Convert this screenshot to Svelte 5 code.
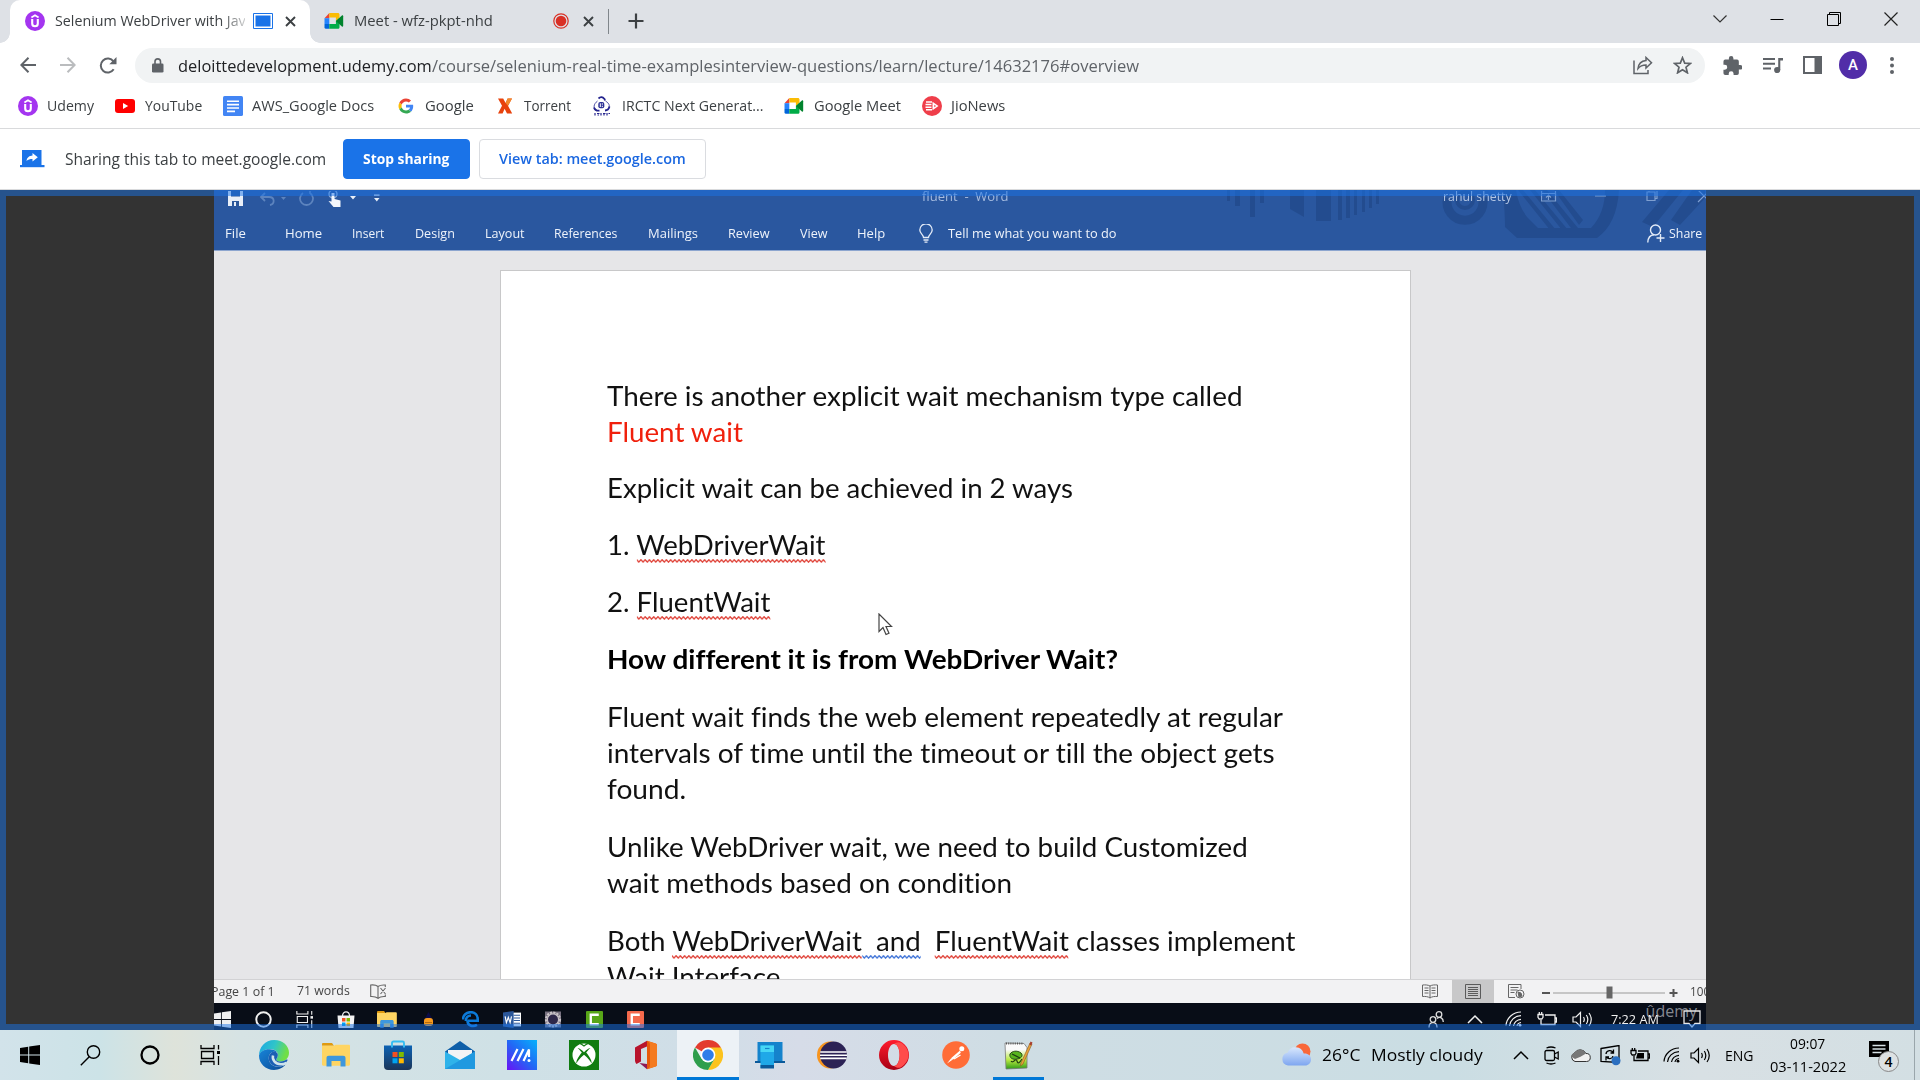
<script>
  // Scales a run of text horizontally so it occupies exactly `width` pixels in the flow.
  function fit(node, width) {
    const apply = () => {
      const natural = node.offsetWidth;
      if (!natural) return;
      node.style.transform = `scaleX(${width / natural})`;
      node.style.marginRight = `${width - natural}px`;
    };
    apply();
    document.fonts.ready.then(apply);
  }

  const bookmarks = [
    { icon: 'udemy', label: 'Udemy', w: 47 },
    { icon: 'youtube', label: 'YouTube', w: 57.5 },
    { icon: 'docs', label: 'AWS_Google Docs', w: 122.5 },
    { icon: 'google', label: 'Google', w: 48.5 },
    { icon: 'torrent', label: 'Torrent', w: 47.5 },
    { icon: 'irctc', label: 'IRCTC Next Generat...', w: 141.5 },
    { icon: 'meet', label: 'Google Meet', w: 87 },
    { icon: 'jio', label: 'JioNews', w: 54 }
  ];

  const menu = [
    ['Home', 37], ['Insert', 32], ['Design', 40], ['Layout', 40], ['References', 63.5],
    ['Mailings', 50], ['Review', 41.5], ['View', 28], ['Help', 28]
  ];

  const innerApps = ['win', 'cortana', 'tasks', 'bag', 'folder', 'lamp', 'oldEdge', 'word', 'gear', 'camGreen', 'camRed'];
  const apps = ['edge', 'folder', 'store', 'mail', 'msi', 'xbox', 'office', 'chrome', 'phone', 'eclipse', 'opera', 'postman', 'npp'];
</script>

{#snippet wave(kind)}
  <svg class="wave {kind}" height="4" aria-hidden="true">
    <defs>
      <pattern id="zig-{kind}" width="4" height="4" patternUnits="userSpaceOnUse">
        <path d="M-1 -.2 0 .8 2 3.1 4 .8 5 -.2" fill="none" stroke="currentColor" stroke-width="1.3" />
      </pattern>
    </defs>
    <rect width="100%" height="4" fill="url(#zig-{kind})" />
  </svg>
{/snippet}

{#snippet glyph(name)}
  {#if name === 'udemy'}
    <svg width="20" height="20" viewBox="0 0 20 20"><circle cx="10" cy="10" r="10" fill="#a435f0" /><path d="M6.400 6.500 10 4.200l3.600 2.300" fill="none" stroke="#fff" stroke-width="1.700" /><path d="M7.200 8v4.500a2.800 2.800 0 0 0 5.600 0V8" fill="none" stroke="#fff" stroke-width="2.100" /></svg>
  {:else if name === 'youtube'}
    <svg width="20" height="20" viewBox="0 0 20 20"><rect y="3" width="20" height="14" rx="3" fill="#f00" /><path d="M8 7v6l5.2-3z" fill="#fff" /></svg>
  {:else if name === 'docs'}
    <svg width="20" height="20" viewBox="0 0 20 20"><rect width="20" height="20" rx="1.6" fill="#4285f4" /><path d="M4 5.2h12M4 8.6h12M4 12h12M4 15.4h8" stroke="#fff" stroke-width="1.6" /></svg>
  {:else if name === 'google'}
    <svg width="20" height="20" viewBox="-8 -8 64 64"><path fill="#ea4335" d="M24 9.5c3.54 0 6.71 1.22 9.21 3.6l6.85-6.85C35.9 2.38 30.47 0 24 0 14.62 0 6.51 5.38 2.56 13.22l7.98 6.19C12.43 13.72 17.74 9.5 24 9.5z" /><path fill="#4285f4" d="M46.98 24.55c0-1.57-.15-3.09-.38-4.55H24v9.02h12.94c-.58 2.96-2.26 5.48-4.78 7.18l7.73 6c4.51-4.18 7.09-10.36 7.09-17.65z" /><path fill="#fbbc05" d="M10.53 28.59A14.5 14.5 0 0 1 9.77 24c0-1.6.27-3.14.76-4.59l-7.98-6.19A24 24 0 0 0 0 24c0 3.88.92 7.54 2.56 10.78z" /><path fill="#34a853" d="M24 48c6.48 0 11.93-2.13 15.89-5.81l-7.73-6c-2.15 1.45-4.92 2.3-8.16 2.3-6.26 0-11.57-4.22-13.47-9.91l-7.98 6.19C6.51 42.62 14.62 48 24 48z" /></svg>
  {:else if name === 'torrent'}
    <svg width="20" height="20" viewBox="0 0 20 20"><path d="M3 2.5h5.2l2.4 4.6 2-4.6H17l-4 7.3 4.2 7.7H12l-2.4-4.8-2 4.8H3l4-7.700z" fill="#e8420c" /><path d="M12.600 2.500H17l-4 7.300-2.400-2.700z" fill="#f28a2c" /></svg>
  {:else if name === 'irctc'}
    <svg width="20" height="20" viewBox="0 0 20 20"><g fill="none" stroke="#23238e"><path d="M6.500 2.500q3-2.800 6 .5l.5 1.500" stroke-width="1.800" /><path d="M5.500 5C1.500 8 .5 12.500 5.500 14.500" stroke-width=".8" /><path d="M2 11.500q1 3.500 5.500 3.200" stroke-width="1.800" /><path d="M13.500 5c4 2.500 4.500 5 3 7.500" stroke-width=".8" /><path d="M17.500 10.500q-1 3.800-4.500 4" stroke-width="1.800" /></g><rect x="6.300" y="6" width="6" height="6.300" rx="2" fill="#2a2f95" /><path d="M8.300 7.300v3.700M10.300 7.300v1.400M10.300 9.700v1.400" stroke="#fff" stroke-width="1" /><path d="M3 17v2.500M5 17.500h2.500M5.500 19h1.500M9 17v2.500M11 17.500h2.500M12 18v1.500M15 17v2.500M16.500 17.500h1.500" stroke="#23238e" stroke-width="1.200" /></svg>
  {:else if name === 'meet'}
    <svg width="20" height="20" viewBox="0 0 20 20"><path fill="#ea4335" d="M5.300 2v5.200H.500z" /><path fill="#fbbc04" d="M5.300 2h8.500c1 0 1.700.600 1.700 1.600V7l-3.600 3V6.500H5.300z" /><path fill="#2684fc" d="M.500 7.200h4.800v5.800H.500z" /><path fill="#0066da" d="M.500 13h4.800v4.800H2A1.500 1.500 0 0 1 .500 16.300z" /><path fill="#00ac47" d="M5.300 17.800V13h6.600v-3l3.600-3v9.200c0 1-.700 1.600-1.700 1.600z" /><path fill="#00832d" d="m11.900 10 6-5.400c.700-.500 1.300-.200 1.300.600v9.600c0 .800-.600 1.100-1.300.600z" /></svg>
  {:else if name === 'jio'}
    <svg width="20" height="20" viewBox="0 0 20 20"><circle cx="10" cy="10" r="10" fill="#ef3e4a" /><path d="M4 6h6M3.500 8.600h6M3.500 11.200h6M4 13.800h6" stroke="#fff" stroke-width="1.500" /><path d="m10.500 5.800 6 4.200-6 4.200z" fill="#fff" /><path d="m12.300 8.800 1.700 1.200-1.700 1.200z" fill="#ef3e4a" /></svg>
  {:else if name === 'win'}
    <svg width="20" height="20" viewBox="0 0 20 20"><path fill="currentColor" d="M0 2.900 8.200 1.700v7.800H0zM9.200 1.500 20 0v9.500H9.200zM0 10.500h8.200v7.800L0 17.100zM9.200 10.500H20V20L9.200 18.500z" /></svg>
  {:else if name === 'cortana'}
    <svg width="20" height="20" viewBox="0 0 20 20"><circle cx="10" cy="10" r="8.500" fill="none" stroke="currentColor" stroke-width="2.300" /></svg>
  {:else if name === 'tasks'}
    <svg width="20" height="20" viewBox="0 0 20 20"><path d="M1 0v3.500h13V0M1 20v-3.500h13V20M1.500 6.500h12v7h-12zM18.500 0v4.500M18.500 11v9" fill="none" stroke="currentColor" stroke-width="1.300" /><path d="M17 6h3v3h-3z" fill="currentColor" /></svg>
  {:else if name === 'edge'}
    <svg width="30" height="30" viewBox="0 0 30 30"><defs><linearGradient id="eg" x1="0" y1="0" x2="1" y2=".3"><stop offset="0" stop-color="#1aa6e6" /><stop offset=".55" stop-color="#30c5c8" /><stop offset="1" stop-color="#70df45" /></linearGradient><linearGradient id="eb" x1="0" y1="0" x2="1" y2="1"><stop offset="0" stop-color="#1784d8" /><stop offset="1" stop-color="#0c4a96" /></linearGradient></defs><path d="M0 16C0 7 6 0 15.200 0 24 0 30 6 30 12.800c0 5.500-4.300 8.700-8.300 8.700-3.700 0-5-1.500-4-3.100 1-1.600 1.100-2.300 1.100-3.700 0-3-3.300-5.600-7.600-5.600C5.300 9.100.8 12 0 16z" fill="url(#eg)" /><path d="M0 15.500C1 11.500 5.500 9 10.600 9.200c3.400 0 6 1 7.400 3-4-1.800-8.300 1-8.300 6 0 5.700 5.400 9.300 11 8.600 2.600-.400 4.500-1.400 6-2.500C24.500 27.500 20 30 15 30 6.500 30 0 23.500 0 15.500z" fill="url(#eb)" /><path d="M9.700 18.300c0-4 2.800-6.700 5.800-6.800 2 .400 3.300 1.700 3.300 3.200 0 1.400-.200 2.200-1.100 3.700-1 1.600.3 3.100 4 3.100 2.300 0 4.300-.9 5.700-1.900.9-.5 1.400.3 1 1-3 5-6.400 6.200-9.400 6.200-5 0-9.300-3.700-9.300-8.500z" fill="#1b5fb4" /><path d="M14 15.500c-1 4 2 8.700 8 8.700 2.200 0 4-.600 5.400-1.400" fill="none" stroke="#cfe3ec" stroke-width="2.500" /></svg>
  {:else if name === 'oldEdge'}
    <svg width="17" height="17" viewBox="0 0 17 17"><path d="M1 8.500C1 4 4.500 1.200 8.700 1.200c4.300 0 7 2.900 7 6.800v1.700H5.500M3.800 10C3.800 6.500 6 4.500 9 4.500M5.500 9.500c0 6 6 6.500 9.500 4.300" fill="none" stroke="#0c7ad8" stroke-width="2.600" /></svg>
  {:else if name === 'bag'}
    <svg width="18" height="17" viewBox="0 0 18 17"><path d="M5.500 5C5.500-.5 12.500-.5 12.500 5" fill="none" stroke="#eee" stroke-width="1.200" /><path d="M.5 4.500h17l-1 12.500h-15z" fill="#f3f3f3" /><path d="M5 7h3.500v3.500H5z" fill="#f25022" /><path d="M9.500 7H13v3.500H9.500z" fill="#7fba00" /><path d="M5 11.500h3.500V15H5z" fill="#00a4ef" /><path d="M9.500 11.500H13V15H9.500z" fill="#ffb900" /></svg>
  {:else if name === 'folder'}
    <svg width="28" height="24" viewBox="0 0 28 24"><path d="M0 1.200C0 .5.500 0 1.200 0H10l2 2.800H0z" fill="#e09a10" /><path d="M0 2.800h12l1.500-1H26.800c.700 0 1.200.500 1.200 1.200V21.500c0 .700-.500 1.200-1.200 1.200H1.200C.500 22.700 0 22.200 0 21.500z" fill="#ffd563" /><path d="M4.500 23.500V15c0-1.400.900-2.300 2.300-2.300h14.400c1.400 0 2.300.9 2.300 2.300v8.500h-5V18h-9v5.500z" fill="#3e97dd" /></svg>
  {:else if name === 'store'}
    <svg width="30" height="30" viewBox="0 0 30 30"><defs><linearGradient id="sg" x1="0" y1="0" x2="0" y2="1"><stop offset="0" stop-color="#0c62b4" /><stop offset="1" stop-color="#1b3558" /></linearGradient></defs><path d="M1 5.500h28V26a4 4 0 0 1-4 4H5a4 4 0 0 1-4-4z" fill="url(#sg)" /><path d="M9 7.500V3C9 2.200 9.600 1.500 10.500 1.500h9c.9 0 1.500.7 1.500 1.500v4.500" fill="none" stroke="#35bdf2" stroke-width="1.900" /><path d="M9.500 12h5v5h-5z" fill="#f25022" /><path d="M15.800 12h5v5h-5z" fill="#7fba00" /><path d="M9.500 18.300h5v5h-5z" fill="#00a4ef" /><path d="M15.800 18.300h5v5h-5z" fill="#ffb900" /></svg>
  {:else if name === 'mail'}
    <svg width="30" height="28" viewBox="0 0 30 28"><path d="M0 10.500 15 0l15 10.500V15H0z" fill="#0f5fa8" /><path d="M3 9h24v10H3z" fill="#f3f3f5" /><path d="M0 10.500 15 19l15-8.500V28H0z" fill="#2fb3ea" /><path d="M0 28 30 10.500V28z" fill="#1a8fdc" opacity=".7" /></svg>
  {:else if name === 'msi'}
    <svg width="30" height="30" viewBox="0 0 30 30"><defs><linearGradient id="mg" x1="0" y1="1" x2="1" y2="0"><stop offset="0" stop-color="#6a12f5" /><stop offset=".5" stop-color="#2268f5" /><stop offset="1" stop-color="#05b2fb" /></linearGradient></defs><path d="M0 0h30v30H0z" fill="url(#mg)" /><path d="m4.500 21 6-12M10.500 21l6-12M16.500 21 22 9.500V17" fill="none" stroke="#fff" stroke-width="2.200" /><circle cx="22" cy="20.500" r="1.500" fill="#fff" /></svg>
  {:else if name === 'xbox'}
    <svg width="30" height="30" viewBox="0 0 30 30"><path d="M0 0h30v30H0z" fill="#107c10" /><circle cx="15" cy="15" r="11.500" fill="#fff" /><path d="M9 3.500c2-.6 4.500.6 6 1.700 1.500-1.100 4-2.300 6-1.700-2 .3-4.400 1.700-6 3.300C13.400 5.200 11 3.800 9 3.500zM8.500 8c1.500 0 4.300 1.800 6.500 4.300C17.200 9.800 20 8 21.500 8c-.700.500-2.500 2.300-4.300 4.500 3.500 4.200 6 8.500 5.300 11-.8-2-3.300-5.300-7.500-8.700-4.200 3.400-6.700 6.700-7.500 8.700-.7-2.500 1.800-6.800 5.300-11C11 10.300 9.200 8.500 8.500 8z" fill="#107c10" /></svg>
  {:else if name === 'office'}
    <svg width="24" height="30" viewBox="0 0 24 30"><path d="M1 7.500 13 .8v5.700L7 9v12.500L2.500 24C1.500 23 1 21.500 1 20.500z" fill="#b8142c" /><path d="m13 .8 8.500 2.700c1 .4 1.500 1 1.500 2V24.500c0 1-.5 1.700-1.500 2L13 29.200z" fill="#e8590c" /><path d="M13 .8c2 .8 3 2.200 3 4V25c0 2-1 3.500-3 4.200l8.500-2.700c1-.3 1.500-1 1.500-2v-19c0-1-.5-1.600-1.500-2z" fill="#f47b20" /><path d="M5.500 23 13 24v5.200z" fill="#8e1a55" /></svg>
  {:else if name === 'chrome'}
    <svg width="30" height="30" viewBox="0 0 30 30"><path d="M15 15 2 7.500A15 15 0 0 1 28 7.500z" fill="#e33b2e" /><path d="M15 15V7.500h13A15 15 0 0 1 15 30l6.500-11.200z" fill="#fcc31e" /><path d="m15 15 6.500 3.800L15 30A15 15 0 0 1 2 7.500l6.500 11.300z" fill="#2f9e4c" /><circle cx="15" cy="15" r="7.400" fill="#fff" /><circle cx="15" cy="15" r="5.800" fill="#2f7de9" /></svg>
  {:else if name === 'phone'}
    <svg width="30" height="28" viewBox="0 0 30 28"><path d="M2.500 1h25v20h-25z" fill="#1583cc" /><path d="M0 20h30v2H0z" fill="#0b5a9a" /><path d="M5.500 4.500h13.500V27H5.500z" fill="#1fa8e8" /><path d="M5.500 4.500h13.500V11H5.500z" fill="#46d6f5" /><path d="M5.500 24h13.500v3.500H5.500z" fill="#0b5a9a" /><path d="M10 7.500h4.500" stroke="#1583cc" stroke-width="1.200" /></svg>
  {:else if name === 'eclipse'}
    <svg width="30" height="28" viewBox="0 0 30 28"><ellipse cx="13" cy="14" rx="13" ry="13.500" fill="#f7941e" /><circle cx="16.500" cy="14" r="13.500" fill="#2c2255" /><path d="M3.200 11h26.500M3 14.200h27M3.200 17.400h26.500" stroke="#fff" stroke-width="1.600" /></svg>
  {:else if name === 'opera'}
    <svg width="30" height="30" viewBox="0 0 30 30"><defs><linearGradient id="og" x1="0" y1="0" x2="0" y2="1"><stop offset="0" stop-color="#ff1b2d" /><stop offset="1" stop-color="#a70014" /></linearGradient></defs><path fill-rule="evenodd" d="M15 0a15 15 0 1 0 0 30 15 15 0 0 0 0-30zm0 4c3.300 0 5.600 4.800 5.600 11S18.300 26 15 26s-6-4.800-6-11S11.700 4 15 4z" fill="url(#og)" /><path d="M15 4c2-1.800 4.600-2.500 7-1.200 10 6.500 10 18 0 24.400-2.400 1.300-5 .6-7-1.200 3.300 0 5.600-4.800 5.600-11S18.300 4 15 4z" fill="#ff4b4b" /></svg>
  {:else if name === 'postman'}
    <svg width="28" height="28" viewBox="0 0 28 28"><circle cx="14" cy="14" r="13.800" fill="#ff6c37" /><circle cx="19.800" cy="7.800" r="2.500" fill="#fff" /><path d="m18 9.600-9 7.700 1.800 1.400 8-7zM9 17.500l-4 5 5.500-3.800z" fill="#fff" /><path d="m12 18 6.500-4" stroke="#fff" stroke-width="1.400" /></svg>
  {:else if name === 'npp'}
    <svg width="30" height="30" viewBox="0 0 30 30"><defs><linearGradient id="ng" x1="0" y1="0" x2="0" y2="1"><stop offset=".25" stop-color="#fafafa" /><stop offset=".65" stop-color="#b9ea42" /><stop offset="1" stop-color="#2f9c18" /></linearGradient></defs><path d="m2 3 19 .5 3 4V28L3 29z" fill="url(#ng)" stroke="#777" stroke-width=".8" /><path d="M3 3.500h17" stroke="#555" stroke-width="2" stroke-dasharray="1 1.200" /><path d="M7 14c2-3 7-4 11-1 3 3-1 6-4 6-4 1-8-1-7-5z" fill="#58b51d" stroke="#264d16" /><path d="M8 21c2 3 5-4 6 0s3 1 5-2M9 14l8 4" fill="none" stroke="#1f3d12" stroke-width="1.200" /><path d="m18 23 9-20 2 1-9 20-2.500 2z" fill="#e8a33a" stroke="#8a5a22" stroke-width=".6" /><path d="m26.300 4.500 1.200-3 2 1-1.200 3z" fill="#a8402f" /></svg>
  {:else if name === 'people'}
    <svg width="16" height="17" viewBox="0 0 16 17" fill="none" stroke="#ddd" stroke-width="1.300"><circle cx="11" cy="3.500" r="2.800" /><circle cx="5" cy="8.500" r="2.800" /><path d="M1 16.500c0-6.500 8-6.500 8 0M9 7.500c3-2.500 6.300-.5 6.300 3.500" /></svg>
  {:else if name === 'caret'}
    <svg width="16" height="10" viewBox="0 0 16 10"><path d="m1 9 7-7 7 7" fill="none" stroke="currentColor" stroke-width="1.500" /></svg>
  {:else if name === 'wifi'}
    <svg width="17" height="16" viewBox="0 0 17 16" fill="none" stroke="currentColor" stroke-width="1.200"><path d="M1 14.500C1.500 7 8 1 16 1M4.500 15C5 9.500 9.500 5 16 4.700M8.500 15c.5-3.500 3.500-6.500 7.500-6.700" /><path d="M12 15c.3-2 2-3.300 4-3.500" /><circle cx="15" cy="14.200" r="1.400" fill="currentColor" stroke="none" /></svg>
  {:else if name === 'speaker'}
    <svg width="21" height="17" viewBox="0 0 21 17" fill="none" stroke="currentColor" stroke-width="1.200"><path d="M1 6h3l4.500-4.500v14L4 11H1zM11.500 6q1.600 2.500 0 5M14.300 4q3 4.500 0 9M17 2q4.500 6.500 0 13" /></svg>
  {:else if name === 'battery'}
    <svg width="20" height="14" viewBox="0 0 20 14" fill="none" stroke="currentColor" stroke-width="1.300"><path d="M8 3h10v9.500H4V8M18 6h1.500v4H18M1 2.500h5v2.800L4.800 7H2.200L1 5.300zM2.300 0v2.500M4.700 0v2.500" /><path class="charge" d="M7.500 5h6.500v5.500H6z" fill="currentColor" stroke="none" /></svg>
  {:else if name === 'lamp'}
    <svg width="17" height="17" viewBox="0 0 17 17"><path d="M8.500 1 3 11h11z" fill="#0c0c48" /><rect x="4" y="7" width="9" height="8" rx="3" fill="#f79a1c" /><path d="M5 11.500h7M5 13.500h7" stroke="#b36a12" /></svg>
  {:else if name === 'word'}
    <svg width="17" height="16" viewBox="0 0 17 16"><path d="M8 1.500h9v13H8z" fill="#fff" /><path d="M10 4h6M10 6.500h6M10 9h6M10 11.500h6" stroke="#2b579a" /><path d="m0 1.500 10-1.500v16L0 14.500z" fill="#2b579a" /><path d="m2 5 1.200 6L5 6l1.700 5L8 5" fill="none" stroke="#fff" stroke-width="1.100" /></svg>
  {:else if name === 'gear'}
    <svg width="18" height="17" viewBox="0 0 18 17"><path d="M1 .5h16v16H1z" fill="#77707f" /><circle cx="9" cy="8.500" r="7" fill="none" stroke="#c9c4c8" stroke-width="2.200" stroke-dasharray="2.200 1.100" /><circle cx="9" cy="8.500" r="5.600" fill="#2e2849" stroke="#c7c1c6" stroke-width="1.200" /></svg>
  {:else if name === 'camGreen' || name === 'camRed'}
    <svg class={name} width="16" height="16" viewBox="0 0 16 16"><rect width="16" height="16" rx="1" fill="currentColor" /><path d="M12 3.500H4.500v9H12" fill="none" stroke="#fff" stroke-width="2.200" /></svg>
  {/if}
{/snippet}

<div class="screen">
  <header class="tabstrip">
    <div class="tab active">
      {@render glyph('udemy')}
      <div class="tabtitle fade"><span class="t" use:fit={191}>Selenium WebDriver with Jav</span></div>
      <svg class="casting" width="20" height="16" viewBox="0 0 20 16"><path d="M.5.500h19v15H.500z" fill="#fff" stroke="#1a73e8" /><path d="M2.500 2.500h15v11h-15z" fill="#1a73e8" /></svg>
      <svg class="x" width="11" height="11" viewBox="0 0 11 11"><path d="m1 1 9 9M10 1l-9 9" stroke="#3c4043" stroke-width="1.900" /></svg>
    </div>
    <div class="tab idle">
      {@render glyph('meet')}
      <div class="tabtitle"><span class="t" use:fit={139}>Meet - wfz-pkpt-nhd</span></div>
      <svg class="rec" width="16" height="16" viewBox="0 0 16 16"><circle cx="8" cy="8" r="7.200" fill="none" stroke="#d93025" stroke-width="1.200" /><circle cx="8" cy="8" r="5.300" fill="#d93025" /></svg>
      <svg class="x" width="11" height="11" viewBox="0 0 11 11"><path d="m1 1 9 9M10 1l-9 9" stroke="#3c4043" stroke-width="1.900" /></svg>
    </div>
    <i class="divider"></i>
    <svg class="plus" width="16" height="16" viewBox="0 0 16 16"><path d="M8 .5v15M.5 8h15" stroke="#3c4043" stroke-width="2.200" /></svg>
    <div class="winctl">
      <svg width="14" height="14" viewBox="0 0 14 14"><path d="m.5 3.500 6.500 6.500 6.500-6.500" fill="none" stroke="#333" stroke-width="1.200" /></svg>
      <svg width="14" height="14" viewBox="0 0 14 14"><path d="M.5 7.500h13" stroke="#000" /></svg>
      <svg width="14" height="14" viewBox="0 0 14 14"><path d="M.5 2.500h11v11H.500zM2.500 2.500V.5h11v11h-2" fill="none" stroke="#000" /></svg>
      <svg width="14" height="14" viewBox="0 0 14 14"><path d="m.5.5 13 13M13.500.5l-13 13" stroke="#222" stroke-width="1.200" /></svg>
    </div>
  </header>

  <div class="toolbar">
    <svg width="16" height="16" viewBox="0 0 16 16"><path d="M8.500.8 1.300 8l7.200 7.200M1.300 8H16" fill="none" stroke="#5f6368" stroke-width="2" /></svg>
    <svg class="fwd" width="16" height="16" viewBox="0 0 16 16"><path d="M7.500.8 14.700 8l-7.200 7.200M14.700 8H0" fill="none" stroke="#babcbe" stroke-width="2" /></svg>
    <svg class="reload" width="18" height="17" viewBox="0 0 18 17"><path d="M14.700 12.300A7 7 0 1 1 14.500 4.500" fill="none" stroke="#5f6368" stroke-width="2" /><path d="M17.500 0v7.200h-7.200z" fill="#5f6368" /></svg>
    <div class="omnibox">
      <svg width="12" height="15" viewBox="0 0 12 15"><rect y="5.500" width="11.500" height="9" rx="1.300" fill="#5f6368" /><path d="M3 6V3.600a2.750 2.750 0 0 1 5.500 0V6" fill="none" stroke="#5f6368" stroke-width="1.600" /></svg>
      <div class="url"><span class="t host" use:fit={254}>deloittedevelopment.udemy.com</span><span class="t path" use:fit={707}>/course/selenium-real-time-examplesinterview-questions/learn/lecture/14632176#overview</span></div>
      <svg class="shareicon" width="20" height="19" viewBox="0 0 20 19" fill="none" stroke="#5f6368" stroke-width="1.500"><path d="M1 4.500V17.500h14V14M5 12.500C5.500 8 8 5 13 4.500V1.500l5.500 5.200L13 12V9c-3.500 0-6 1-8 3.500z" /></svg>
      <svg width="19" height="18" viewBox="0 0 19 18"><path d="m9.500 1.700 2.200 5.400 5.700.4-4.400 3.700 1.400 5.600-4.900-3.100-4.900 3.100L6 11.200 1.600 7.500l5.700-.4z" fill="none" stroke="#5f6368" stroke-width="1.700" /></svg>
    </div>
    <svg class="puzzle" width="19" height="19" viewBox="1.500 1 21 21"><path fill="#5f6368" d="M20.500 11H19V7a2 2 0 0 0-2-2h-4V3.500a2.500 2.500 0 0 0-5 0V5H4a2 2 0 0 0-2 2v3.800h1.500a2.700 2.700 0 0 1 0 5.400H2V20a2 2 0 0 0 2 2h3.800v-1.500a2.700 2.700 0 0 1 5.400 0V22H17a2 2 0 0 0 2-2v-4h1.500a2.500 2.500 0 0 0 0-5z" /></svg>
    <svg class="queue" width="20" height="17" viewBox="0 0 20 17"><path d="M0 2h12M0 6.700h12M0 11.500h8" stroke="#5f6368" stroke-width="1.900" /><path d="M15.200 13V1h4.800v2.400h-2.700V13z" fill="#5f6368" /><circle cx="14.200" cy="13" r="3.100" fill="#5f6368" /></svg>
    <svg class="panel" width="19" height="18" viewBox="0 0 19 18"><path d="M1 1h17v16H1z" fill="#fff" stroke="#5f6368" stroke-width="2" /><path d="M11.500 1H18v16h-6.500z" fill="#5f6368" /></svg>
    <span class="avatar">A</span>
    <svg class="dots" width="4" height="17" viewBox="0 0 4 17" fill="#5f6368"><circle cx="2" cy="2" r="2" /><circle cx="2" cy="8.500" r="2" /><circle cx="2" cy="15" r="2" /></svg>
  </div>

  <nav class="bookmarks">
    {#each bookmarks as b}
      <div class="bookmark">{@render glyph(b.icon)}<span class="t" use:fit={b.w}>{b.label}</span></div>
    {/each}
  </nav>

  <div class="infobar">
    <svg width="25" height="18" viewBox="0 0 25 18"><path d="M2 0h19.500v15H2z" fill="#1a73e8" /><path d="M0 15h24.500v2.200H0z" fill="#1a73e8" /><path d="M6.500 11c.5-3.800 3-5.300 6-5.500V3l5.300 4.200-5.300 4.200V9c-2.500 0-4.500.5-6 2z" fill="#fff" /></svg>
    <span class="t share-text" use:fit={261.5}>Sharing this tab to meet.google.com</span>
    <button class="stop"><span class="t" use:fit={86}>Stop sharing</span></button>
    <button class="view"><span class="t" use:fit={186.5}>View tab: meet.google.com</span></button>
  </div>

  <main class="stage">
    <section class="video">
      <div class="wordhead">
        <svg class="art" width="520" height="60" viewBox="0 0 520 60" aria-hidden="true">
          <g fill="#1f4686" opacity=".62">
            <path d="M31 0h3v11h-3zM39 0h5v16h-5zM54 0h5v27h-5zM64 0h4v13h-4z" transform="translate(11 0)" />
            <path d="M105 0h14v27l-14-8zM131 0h15v31h-15zM153 0h4v30h-4zM161 0h4v28h-4zM169 0h3v25h-3zM177 0h3v22h-3zM184 0h3v18h-3zM191 0h3v14h-3z" />
            <path d="M333 0h5l33 40h-6zM345 0h5l33 40h-6zM357 0h5l31 38-4 4zM369 0h5l24 30-4 5zM484 0h14l-30 37-11-5zM507 0h13v8l-25 27-9-5z" />
            <path d="M318 0h13q3 18 12 28l10 10h53q14-15 14-38h14q-2 34-22 48h-80l-12-11Q320 24 318 0z" />
          </g>
          <g fill="none" stroke="#1f4686" opacity=".62"><path d="M262.500 8a18 18 0 1 0 35 0" stroke-width="9" /><circle cx="280" cy="10" r="8" stroke-width="4" /></g>
        </svg>
        <div class="wordtitle">
          <svg class="qat" width="170" height="20" viewBox="0 0 170 20"><path d="M1 0h15v15H1z" fill="#e9eff8" /><path d="M4 0h9v5.500H4zM5 10h7v5H5z" fill="#2b579a" /><path d="M7 11h2v4H7z" fill="#e9eff8" /><g fill="none" stroke="#5d84be" stroke-width="1.800"><path d="m38 2-4 4 4 4M34 6h8c6 0 6 7 1 8M76 2a6.500 6.500 0 1 0 7 0V-1" /></g><path d="m54 6 5 0-2.500 3z" fill="#5d84be" /><circle cx="106" cy="3" r="4" fill="none" stroke="#8fadd8" stroke-width="1.500" /><path d="M104.500 2h3v6l6 1.500V16h-7l-5-6 3 .5z" fill="#f4f7fc" /><path d="M123 5h6l-3 3.500zM147 3.500h5.500v1.300H147zM147 7h5.500l-2.700 3.500z" fill="#e9eff8" /></svg>
          <span class="t docname" use:fit={86.5}>fluent  -  Word</span>
          <span class="t user" use:fit={69}>rahul shetty</span>
          <svg class="ctl" width="168" height="14" viewBox="0 0 168 14" fill="none" stroke="#7f9fd0" stroke-width="1.200"><path d="M.5-1h14v11H.5zM.5 2.500h14M7.500 9V4M5 6.500 7.500 4 10 6.500M54 5h11M106 1h8v8.500h-8zM108 1v-2h8v8.500h-2M157-1l12 12M169-1l-12 12" /></svg>
        </div>
        <div class="menu">
          <span class="t file" use:fit={20.500}>File</span>
          {#each menu as [label, w]}<span class="t" use:fit={w}>{label}</span>{/each}
          <svg class="bulb" width="14" height="19" viewBox="0 0 14 19" fill="none" stroke="#e4ecf8" stroke-width="1.300"><path d="M4.500 13.500c0-3-3.700-4-3.700-7.500a6 6 0 0 1 12.400 0c0 3.500-3.700 4.500-3.700 7.500zM4.500 16h5M5.500 18.200h3" /></svg>
          <span class="t tell" use:fit={169}>Tell me what you want to do</span>
          <svg class="person" width="18" height="19" viewBox="0 0 18 19" fill="none" stroke="#e4ecf8" stroke-width="1.400"><circle cx="8.500" cy="6" r="5" /><path d="M.8 18.500C1 14 3.500 11 7 10.800M13.500 10v8M9.500 14h8" /></svg>
          <span class="t" use:fit={33}>Share</span>
        </div>
      </div>

      <div class="canvas">
        <article class="page">
          <p class="g1"><span class="t" use:fit={635}>There is another explicit wait mechanism type called</span><span class="t red" use:fit={135.500}>Fluent wait</span></p>
          <p class="g1"><span class="t" use:fit={465.500}>Explicit wait can be achieved in 2 ways</span></p>
          <p class="g1"><span class="t" use:fit={218.500}>1. <span class="sp">WebDriverWait{@render wave('bad')}</span></span></p>
          <p class="g2"><span class="t" use:fit={163.500}>2. <span class="sp">FluentWait{@render wave('bad')}</span></span></p>
          <p class="g2"><b class="t" use:fit={511}>How different it is from WebDriver Wait?</b></p>
          <p class="g2"><span class="t" use:fit={676}>Fluent wait finds the web element repeatedly at regular</span><span class="t" use:fit={668}>intervals of time until the timeout or till the object gets</span><span class="t" use:fit={79}>found.</span></p>
          <p class="g2"><span class="t" use:fit={641}>Unlike WebDriver wait, we need to build Customized</span><span class="t" use:fit={405}>wait methods based on condition</span></p>
          <p class="g2"><span class="t" use:fit={689}>Both <span class="sp">WebDriverWait{@render wave('bad')}</span><span class="sp">{'\u00a0\u00a0'}and{@render wave('grammar')}</span>{'\u00a0\u00a0'}<span class="sp">FluentWait{@render wave('bad')}</span> classes implement</span><span class="t" use:fit={173}>Wait Interface</span></p>
        </article>
        <svg class="cursor" width="15" height="23" viewBox="0 0 15 23"><path d="M1 1v17.500l4-4 3 7 3-1.300-3-6.700h5.500z" fill="#fff" stroke="#444" stroke-width="1.200" /></svg>
      </div>

      <div class="status">
        <span class="t" use:fit={63.5}>Page 1 of 1</span>
        <span class="t words" use:fit={53}>71 words</span>
        <svg class="proof" width="17" height="15" viewBox="0 0 17 15" fill="none" stroke="#666" stroke-width="1.100"><path d="M8 2.500C6 .8 3 .8.700 1v11.500c3-.2 5 0 7.300 1.800zM8 2.500C10 1 13 .8 15.300 1v2M8 14.300c2-1.800 5-2 7.300-1.800v-2M10.500 4l5 6M15.500 4l-5 6" /></svg>
        <div class="views">
          <div class="vw"><svg width="16" height="15" viewBox="0 0 16 15" fill="none" stroke="#666"><path d="M8 2C6 .8 3 .8.500 1v11.500c3-.2 5.500 0 7.500 1.500 2-1.500 4.500-1.700 7.500-1.500V1C13 .8 10 .8 8 2zM8 2v12M2.500 4h4M2.500 6.500h4M2.500 9h4M9.500 4h4M9.500 6.500h4M9.500 9h4" /></svg></div>
          <div class="vw on"><svg width="16" height="15" viewBox="0 0 16 15" fill="none" stroke="#5b5b5b"><path d="M.5.500h15v14H.500zM3 3.500h10M3 5.500h10M3 7.500h10M3 9.500h10M3 11.500h10" /></svg></div>
          <div class="vw"><svg width="17" height="15" viewBox="0 0 17 15" fill="none" stroke="#666"><path d="M13 5V.5H.5v13H7M2.500 3.500h8M2.500 6h7M2.500 8.500h4" /><circle cx="12" cy="10" r="4" /><path d="m10 8 3 1 1 3-3 1z" fill="#666" /></svg></div>
          <svg class="zoom" width="136" height="14" viewBox="0 0 136 14"><path d="M0 8h8M127.500 8h8M131.500 4v8" stroke="#555" stroke-width="2" /><path d="M11 8h112" stroke="#999" stroke-width="1.200" /><path d="M64.500 1.500h6v12h-6z" fill="#666" /></svg>
          <span class="t" use:fit={20}>100</span>
        </div>
      </div>

      <div class="innerbar">
        {#each innerApps as a}<div class="islot {a}">{@render glyph(a)}</div>{/each}
        <div class="itray">
          <div class="s1">{@render glyph('people')}</div>
          <div class="s2">{@render glyph('caret')}</div>
          <div class="s3">{@render glyph('wifi')}</div>
          <div class="s4">{@render glyph('battery')}</div>
          <div class="s5">{@render glyph('speaker')}</div>
          <span class="t" use:fit={48}>7:22 AM</span>
          <svg class="note" width="18" height="18" viewBox="0 0 18 18"><path d="M1 1h16v12.500h-5L9 17l-3-3.500H1z" fill="none" stroke="#e8e8e8" stroke-width="1.300" /></svg>
        </div>
        <span class="watermark">ûdemy</span>
      </div>
    </section>
    <div class="frame"></div>
  </main>

  <footer class="taskbar">
    <div class="sys">{@render glyph('win')}</div>
    <div class="sys"><svg width="21" height="21" viewBox="0 0 21 21" fill="none" stroke="#000" stroke-width="1.400"><circle cx="13.500" cy="7" r="6.200" /><path d="M9.500 11.500.8 20.200" /></svg></div>
    <div class="sys">{@render glyph('cortana')}</div>
    <div class="sys">{@render glyph('tasks')}</div>
    {#each apps as a}<div class="app {a}">{@render glyph(a)}</div>{/each}
    <div class="tray">
      <svg class="weather" width="31" height="24" viewBox="0 0 31 24"><defs><linearGradient id="wc" x1="0" y1="0" x2="0" y2="1"><stop offset="0" stop-color="#d9e8fd" /><stop offset="1" stop-color="#7ea6f0" /></linearGradient></defs><circle cx="21.500" cy="8.500" r="8" fill="#f9683a" /><path d="M7 22.500a6.500 6.500 0 0 1-.5-12.800 8.500 8.500 0 0 1 16.200.8c4.500-.3 7.300 2.300 7.300 6 0 3.500-2.500 6-6 6z" fill="url(#wc)" /></svg>
      <span class="t temp" use:fit={38}>26°C</span>
      <span class="t sky" use:fit={112}>Mostly cloudy</span>
      <div class="c1">{@render glyph('caret')}</div>
      <svg class="c2" width="16" height="19" viewBox="0 0 16 19" fill="none" stroke="#000" stroke-width="1.300"><rect x="1" y="4.500" width="9.500" height="10" rx="1.500" /><path d="m10.500 8 3.700-2v7l-3.700-2M2.500 2Q7 0 11.500 2M2.500 17Q7 19 11.500 17" /></svg>
      <svg class="c3" width="21" height="15" viewBox="0 0 21 15"><path d="M5 13.500A4.500 4.500 0 0 1 4.500 5 6.500 6.500 0 0 1 16 5.500a4 4 0 0 1 .5 8z" fill="#f1f1f1" stroke="#333" /><path d="M1.200 8.500C1.500 6.500 3 5.200 4.500 5A6.500 6.500 0 0 1 16 5.500l-5.500 3.200L5 11z" fill="#777" /></svg>
      <svg class="c4" width="21" height="21" viewBox="0 0 21 21"><path d="m1 3.500 18-3v17L1 16.500z" fill="none" stroke="#000" stroke-width="1.300" /><path d="M6 9c.5-4 6-4.500 7-1M13.500 4.500V8h-3M13 11c-.500 3-5 3.500-6.500 1M6 15.500V12h3" fill="none" stroke="#000" stroke-width="1.300" /><circle cx="16" cy="15.800" r="4.500" fill="#2b6fc0" /></svg>
      <div class="c5">{@render glyph('battery')}</div>
      <div class="c6">{@render glyph('wifi')}</div>
      <div class="c7">{@render glyph('speaker')}</div>
      <span class="t eng" use:fit={29}>ENG</span>
      <div class="clock"><span class="t" use:fit={35}>09:07</span><span class="t" use:fit={76}>03-11-2022</span></div>
      <div class="action">
        <svg width="20" height="20" viewBox="0 0 20 20"><path d="M0 0h20v16h-5v4l-4.500-4H0z" fill="#000" /><path d="M3.500 4.500h13M3.500 8h13M3.500 11.500h9" stroke="#d5e0e4" stroke-width="1.300" /></svg>
        <span class="count">4</span>
      </div>
      <i class="peek"></i>
    </div>
  </footer>
</div>

<style>
  :global(body) { margin: 0; background: #fff; overflow: hidden; }
  .screen { width: 1920px; height: 1080px; display: flex; flex-direction: column; overflow: hidden; font-family: "Open Sans", "Noto Sans", sans-serif; font-size: 15px; color: #3c4043; background: #fff; }
  svg { display: block; flex: none; }
  .t { display: block; width: max-content; flex: none; white-space: pre; transform-origin: 0 50%; }

  .tabstrip { height: 43px; flex: none; display: flex; align-items: center; background: #dee1e6; padding-left: 10px; }
  .tab { display: flex; align-items: center; height: 43px; box-sizing: border-box; line-height: 20px; padding-bottom: 1px; }
  .tab.active { position: relative; width: 300px; background: #fff; border-radius: 10px 10px 0 0; padding-left: 15px; }
  .tab.active::before, .tab.active::after { content: ""; position: absolute; bottom: 0; width: 10px; height: 10px; }
  .tab.active::before { left: -10px; background: radial-gradient(circle at 0 0, transparent 9.500px, #fff 10px); }
  .tab.active::after { right: -10px; background: radial-gradient(circle at 100% 0, transparent 9.500px, #fff 10px); }
  .tabtitle { width: 190px; margin-left: 10px; padding-bottom: 2px; overflow: hidden; }
  .fade { -webkit-mask-image: linear-gradient(90deg, #000 165px, rgba(0, 0, 0, .25) 190px); mask-image: linear-gradient(90deg, #000 165px, rgba(0, 0, 0, .25) 190px); }
  .casting { margin-left: 8px; }
  .x { margin-left: 12px; }
  .idle { width: 298px; padding-left: 14px; }
  .idle .rec { margin-left: 9px; }
  .idle .x { margin-left: 14px; }
  .divider { width: 1px; height: 25px; background: #80868b; }
  .plus { margin-left: 19px; margin-bottom: 1px; }
  .winctl { margin-left: auto; display: flex; gap: 43px; padding-right: 22px; margin-top: -6px; }

  .toolbar { height: 45px; flex: none; display: flex; align-items: center; padding: 0 0 1px 20px; box-sizing: border-box; }
  .fwd { margin-left: 24px; }
  .reload { margin-left: 23px; }
  .omnibox { width: 1570px; height: 35px; margin-left: 18px; border-radius: 18px; background: #f1f3f4; display: flex; align-items: center; padding: 0 13px 0 17px; box-sizing: border-box; }
  .url { display: flex; margin-left: 14px; flex: 1; font-size: 17px; line-height: 24px; padding-top: 1px; }
  .host { color: #202124; }
  .path { color: #5f6368; }
  .shareicon { margin-right: 20px; }
  .puzzle { margin-left: 18px; }
  .queue { margin-left: 21px; }
  .panel { margin-left: 20px; }
  .avatar { width: 28px; height: 28px; margin-left: 17px; border-radius: 50%; background: #512da8; color: #fff; font: 500 15px/28px Roboto, sans-serif; text-align: center; }
  .dots { margin-left: 23px; }

  .bookmarks { height: 40px; flex: none; display: flex; align-items: center; gap: 21.300px; padding: 0 0 4px 18px; box-sizing: border-box; line-height: 20px; }
  .bookmark { display: flex; align-items: center; gap: 9.200px; }
  .bookmark .t { padding-bottom: 2px; }
  .infobar { height: 62px; flex: none; box-sizing: border-box; border-top: 1px solid #d9dadc; border-bottom: 1px solid #d9dadc; display: flex; align-items: center; padding-left: 20px; }
  .share-text { margin-left: 19.500px; font-size: 16px; line-height: 22px; }
  button { height: 40px; box-sizing: border-box; padding: 0; display: flex; align-items: center; justify-content: center; border-radius: 4px; border: 1px solid #dadce0; background: #fff; font: 600 14.500px/20px "Open Sans", sans-serif; }
  .stop { width: 127px; margin-left: 17px; background: #1a73e8; border-color: #1a73e8; color: #fff; }
  .stop .t { font-weight: 700; }
  .view { width: 227px; margin-left: 9px; color: #1a67e0; }

  .stage { position: relative; height: 840px; flex: none; display: flex; justify-content: center; background: #333; }
  .frame { position: absolute; inset: 0; border: 6px solid rgba(26, 115, 232, .5); }
  .video { position: relative; width: 1492px; height: 840px; display: flex; flex-direction: column; overflow: hidden; }
  .wordhead { position: relative; height: 61px; flex: none; box-sizing: border-box; background: #2a579f; border-bottom: 1px solid #8da6cf; color: #eef3fb; }
  .art { position: absolute; left: 971px; top: 0; }
  .wordtitle { position: relative; height: 26px; display: flex; align-items: flex-start; overflow: hidden; font-size: 12.500px; line-height: 16px; }
  .qat { margin: 1px 0 0 13px; }
  .docname { margin-left: 525px; margin-top: -1.500px; color: #a5bbdf; }
  .user { margin-left: 434.500px; margin-top: -1px; color: #b3c6e4; }
  .ctl { margin-left: 29px; margin-top: 1px; }
  .menu { position: relative; height: 34px; display: flex; align-items: center; gap: 30.200px; padding: 0 4px 0 11px; box-sizing: border-box; font-size: 13.500px; font-weight: 500; line-height: 18px; }
  .menu .file + .t { margin-left: 8.500px; }
  .menu .t { padding-bottom: 1px; }
  .bulb { margin-left: 3.500px; }
  .tell { margin-left: -15.500px; }
  .person { margin-left: auto; }
  .person + .t { margin-left: -26.700px; }

  .canvas { position: relative; height: 728px; flex: none; overflow: hidden; background: #e6e6e8; box-sizing: border-box; padding: 18.500px 0 0 286px; }
  .page { width: 911px; height: 730px; box-sizing: border-box; background: #fff; border: 1px solid #c8c8c9; padding: 107px 0 0 106px; font: 26px/36px Lato, sans-serif; font-variant-ligatures: none; color: #111; }
  p { margin: 0; }
  .g1 { margin-bottom: 20.700px; }
  .g2 { margin-bottom: 21.900px; }
  .red { color: #f0200c; }
  b { font-weight: 700; color: #000; }
  .sp { position: relative; white-space: pre; }
  .wave { position: absolute; left: 0; bottom: -2px; width: 100%; }
  .bad { color: #e0443a; }
  .grammar { color: #3f74d8; }
  .cursor { position: absolute; left: 664px; top: 362px; }

  .status { height: 24px; flex: none; display: flex; align-items: center; background: #f2f2f3; border-top: 1px solid #d2d2d4; box-sizing: border-box; font-size: 13.500px; line-height: 20px; color: #444; }
  .status > .t:first-child { margin-left: -3px; }
  .status .t { padding-bottom: 2px; }
  .status > .words { margin-left: 22px; padding-bottom: 4px; }
  .proof { margin-left: 21px; }
  .views { margin-left: auto; display: flex; align-items: center; height: 100%; margin-right: -4px; }
  .vw { width: 42px; height: 100%; display: flex; align-items: center; justify-content: center; }
  .vw:first-child { width: 44px; }
  .vw.on { background: #c8c8c9; }
  .vw:nth-child(3) { width: 45px; }
  .zoom { margin-left: 3px; margin-right: 12px; }

  .innerbar { position: relative; height: 27px; flex: none; display: flex; align-items: flex-start; background: #080d17; color: #f0f0f0; }
  .islot { width: 41.400px; height: 18px; margin-top: 7px; display: flex; justify-content: center; align-items: center; }
  .islot:first-child { width: 28.500px; justify-content: flex-start; }
  .islot :global(svg) { height: 17px; width: auto; }
  .camGreen { color: #58a618; }
  .camRed { color: #f4694c; }
  .itray { margin-left: auto; display: flex; align-items: center; height: 20px; margin-top: 6px; padding-right: 5px; font-size: 13.500px; line-height: 18px; }
  .itray :global(.charge) { display: none; }
  .s2 { margin-left: 23px; }
  .s3 { margin-left: 22px; }
  .s4 { margin-left: 15px; }
  .s5 { margin-left: 15px; margin-right: 17.500px; }
  .note { margin-left: 24.500px; }
  .watermark { position: absolute; right: 9px; top: -2px; font-size: 16px; line-height: 20px; color: rgba(220, 222, 226, .6); }

  .taskbar { height: 50px; flex: none; display: flex; align-items: center; color: #000; background: linear-gradient(90deg, #d2e3ea 0, #cce3e7 100px, #dee3da 175px, #d6e3e4 240px, #cfe1e6 500px, #d0dee7 690px, #d6dce8 800px, #cfdde4 1000px, #cadde3 1450px, #d8e0e4 1700px, #d3dfe3 1920px); }
  .sys { width: 60px; height: 50px; display: flex; align-items: center; justify-content: center; }
  .app { width: 62px; height: 50px; box-sizing: border-box; display: flex; align-items: center; justify-content: center; flex: none; }
  .app.edge { margin-left: 3px; }
  .app.chrome { background: #edf2f6; border-bottom: 3px solid #0078d7; padding-top: 3px; }
  .app.npp { background: linear-gradient(#0078d7, #0078d7) 50% 100% / 51px 3px no-repeat; }
  .tray { display: flex; align-items: center; margin-left: auto; height: 50px; font-size: 16.500px; line-height: 22px; }
  .temp { margin-left: 10px; }
  .sky { margin-left: 10.500px; }
  .c1 { margin-left: 30.500px; }
  .c2 { margin-left: 15px; }
  .c3 { margin-left: 10px; }
  .c4 { margin-left: 9px; }
  .c5 { margin-left: 9px; }
  .c6 { margin-left: 13px; }
  .c7 { margin-left: 10px; }
  .eng { margin-left: 14px; font-size: 15px; }
  .clock { width: 76px; margin-left: 16px; display: flex; flex-direction: column; align-items: flex-start; font-size: 15px; line-height: 23px; }
  .clock .t:first-child { margin-left: 19.500px; }
  .action { position: relative; margin-left: 23px; width: 30px; height: 22px; }
  .action svg { margin-top: -3px; }
  .count { position: absolute; left: 9px; top: 7px; width: 19px; height: 19px; border: 1px solid #888; border-radius: 50%; background: #dde1e3; text-align: center; font-size: 14px; font-weight: 600; line-height: 19px; }
  .peek { width: 1px; height: 50px; background: #9aa6ab; margin: 0 5px 0 15px; }
</style>
